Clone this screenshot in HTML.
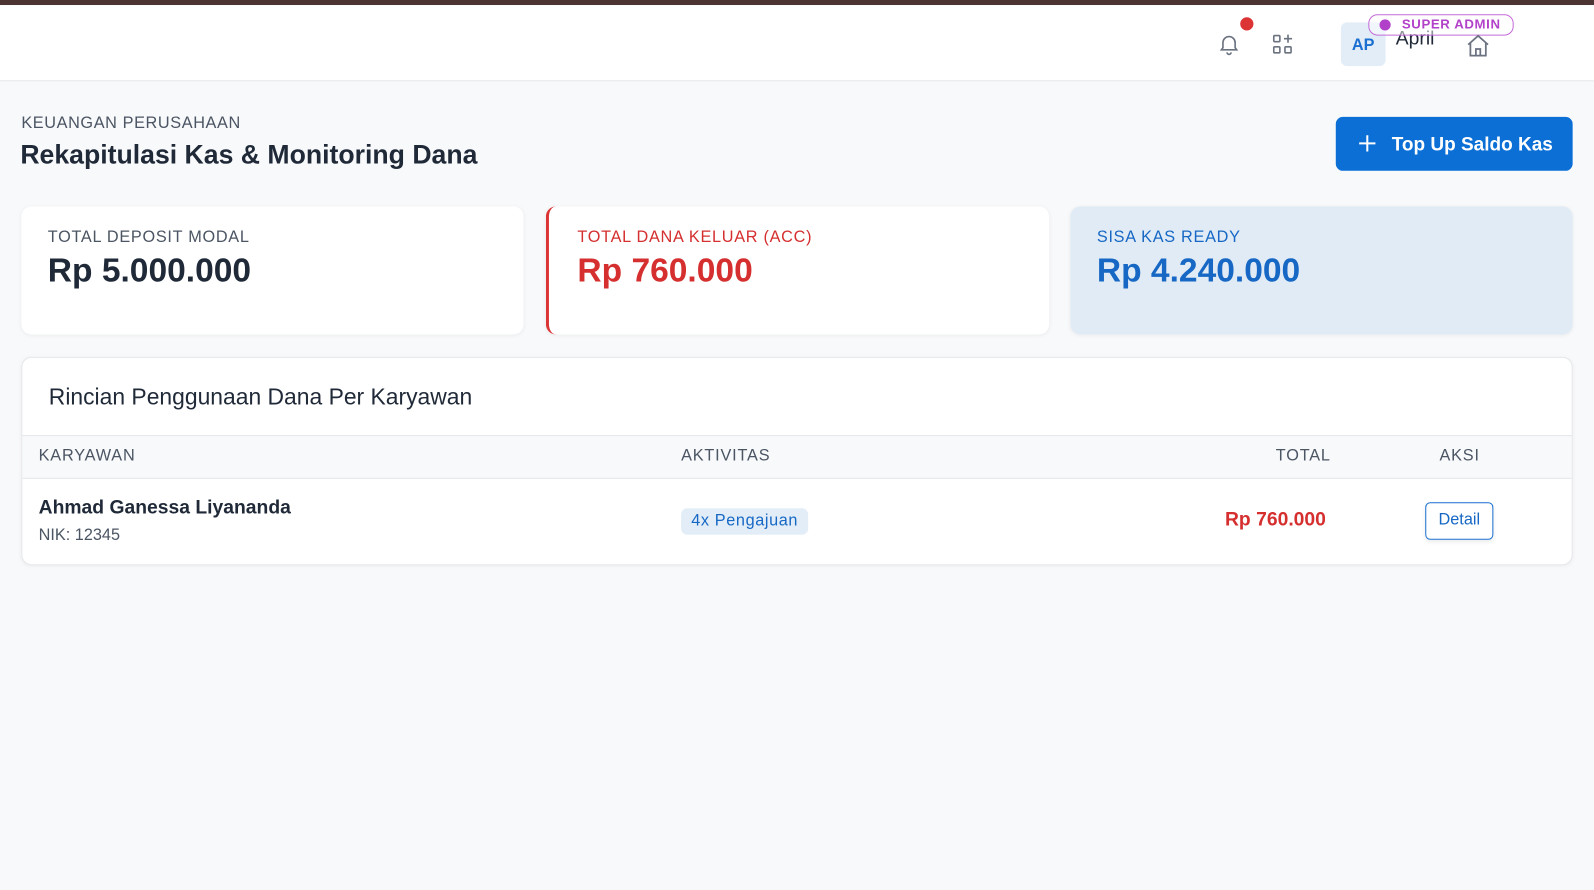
<!DOCTYPE html>
<html><head><meta charset="utf-8"><style>
*{box-sizing:border-box;margin:0;padding:0}
html,body{width:1594px;height:889px;overflow:hidden;background:#f8f9fb}
body{font-family:"Liberation Sans",sans-serif;color:#1f2937}
#w{position:absolute;left:0;top:0;width:1568px;height:875px;transform:scale(1.01658);transform-origin:0 0}
.top{height:5px;background:#4b3432}
.hdr{height:75px;background:#fff;border-bottom:1px solid #e5e7eb;position:relative}
.abs{position:absolute}
.card{position:absolute;top:203px;height:126px;background:#fff;border-radius:10px;box-shadow:0 1px 4px rgba(0,0,0,.06)}
.lbl{position:absolute;left:26px;top:22px;font-size:16px;letter-spacing:.7px}
.val{position:absolute;left:26px;top:44px;font-size:33px;font-weight:bold}
</style></head><body><div id="w">
<div class="top"></div>
<div class="hdr">
 <svg class="abs" style="left:1197px;top:26px" width="24" height="24" viewBox="0 0 24 24" fill="none" stroke="#6b7280" stroke-width="1.6"><path d="M6 16V11a6 6 0 0 1 12 0v5l1.5 2h-15z"/><path d="M10 20.5a2 2 0 0 0 4 0"/></svg>
 <div class="abs" style="left:1220px;top:12px;width:13px;height:13px;border-radius:50%;background:#dc3434"></div>
 <svg class="abs" style="left:1250px;top:27px" width="24" height="24" viewBox="0 0 24 24" fill="none" stroke="#6b7280" stroke-width="1.6"><rect x="3" y="3" width="6" height="6" rx="1"/><rect x="3" y="14" width="6" height="6" rx="1"/><rect x="14" y="14" width="6" height="6" rx="1"/><path d="M17 2v8M13 6h8"/></svg>
 <div class="abs" style="left:1319px;top:17px;width:44px;height:43px;background:#e3edf8;border-radius:6px;color:#1a6fd1;font-weight:bold;font-size:16px;text-align:center;line-height:45px">AP</div>
 <div class="abs" style="left:1373px;top:23px;font-size:19px;color:#1f2937">April</div>
 <div class="abs" style="left:1346px;top:9px;width:143px;height:21px;border:1.5px solid #c46bd8;border-radius:9px;background:rgba(255,255,255,.5);color:#b241c9;font-size:13px;font-weight:bold;letter-spacing:.6px;line-height:18px;padding-left:32px">SUPER ADMIN</div>
 <div class="abs" style="left:1357px;top:14px;width:11px;height:11px;border-radius:50%;background:#b241c9"></div>
 <svg class="abs" style="left:1441px;top:27px" width="26" height="26" viewBox="0 0 24 24" fill="none" stroke="#6b7280" stroke-width="1.6"><path d="M3 11L12 3l9 8"/><path d="M5 9.5V21h14V9.5"/><path d="M10 21v-6h4v6"/></svg>
</div>
<div class="abs" style="left:21px;top:113px;font-size:16px;color:#4b5563;letter-spacing:.6px">KEUANGAN PERUSAHAAN</div>
<div class="abs" style="left:20px;top:137px;font-size:26.2px;font-weight:bold;color:#1f2937">Rekapitulasi Kas &amp; Monitoring Dana</div>
<div class="abs" style="left:1314px;top:115px;width:233px;height:53px;background:#0b6fd6;border-radius:7px;color:#fff;font-size:18.7px;font-weight:bold;line-height:53px;padding-left:55px">Top Up Saldo Kas</div>
<svg class="abs" style="left:1335px;top:131px" width="20" height="20" viewBox="0 0 20 20" stroke="#fff" stroke-width="2"><path d="M10 2v16M2 10h16"/></svg>
<div class="card" style="left:21px;width:494px"><div class="lbl" style="color:#4b5563">TOTAL DEPOSIT MODAL</div><div class="val" style="color:#1f2937">Rp 5.000.000</div></div>
<div class="card" style="left:537px;width:495px;border-left:3px solid #dc3434"><div class="lbl" style="left:28px;color:#d52f2f">TOTAL DANA KELUAR (ACC)</div><div class="val" style="left:28px;color:#d52f2f">Rp 760.000</div></div>
<div class="card" style="left:1053px;width:494px;background:#e1ebf6"><div class="lbl" style="color:#1668c4">SISA KAS READY</div><div class="val" style="color:#1668c4">Rp 4.240.000</div></div>
<div class="abs" style="left:21px;top:351px;width:1526px;height:205px;background:#fff;border:1px solid #e5e7eb;border-radius:10px;overflow:hidden;box-shadow:0 1px 4px rgba(0,0,0,.05)">
 <div class="abs" style="left:26px;top:26px;font-size:22.5px;color:#1f2937">Rincian Penggunaan Dana Per Karyawan</div>
 <div class="abs" style="left:0;top:76px;width:100%;height:43px;background:#f8f9fb;border-top:1px solid #e5e7eb;border-bottom:1px solid #e5e7eb;font-size:16px;color:#4b5563;letter-spacing:.8px">
  <span class="abs" style="left:16px;top:11px">KARYAWAN</span>
  <span class="abs" style="left:648px;top:11px">AKTIVITAS</span>
  <span class="abs" style="left:1233px;top:11px">TOTAL</span>
  <span class="abs" style="left:1394px;top:11px">AKSI</span>
 </div>
 <div class="abs" style="left:16px;top:137px;font-size:19px;font-weight:bold;color:#1f2937">Ahmad Ganessa Liyananda</div>
 <div class="abs" style="left:16px;top:166px;font-size:16px;color:#4b5563">NIK: 12345</div>
 <div class="abs" style="left:648px;top:148px;height:26px;padding:0 10px;background:#e3edf8;border-radius:6px;color:#1668c4;font-size:16px;line-height:26px;letter-spacing:.6px">4x Pengajuan</div>
 <div class="abs" style="left:1183px;top:149px;font-size:19px;font-weight:bold;color:#d52f2f">Rp 760.000</div>
 <div class="abs" style="left:1380px;top:142px;width:67px;height:37px;border:1.5px solid #1a6fd1;border-radius:5px;color:#1668c4;font-size:16px;text-align:center;line-height:34px;box-shadow:0 2px 4px rgba(0,0,0,.08)">Detail</div>
</div>
</div></body></html>
